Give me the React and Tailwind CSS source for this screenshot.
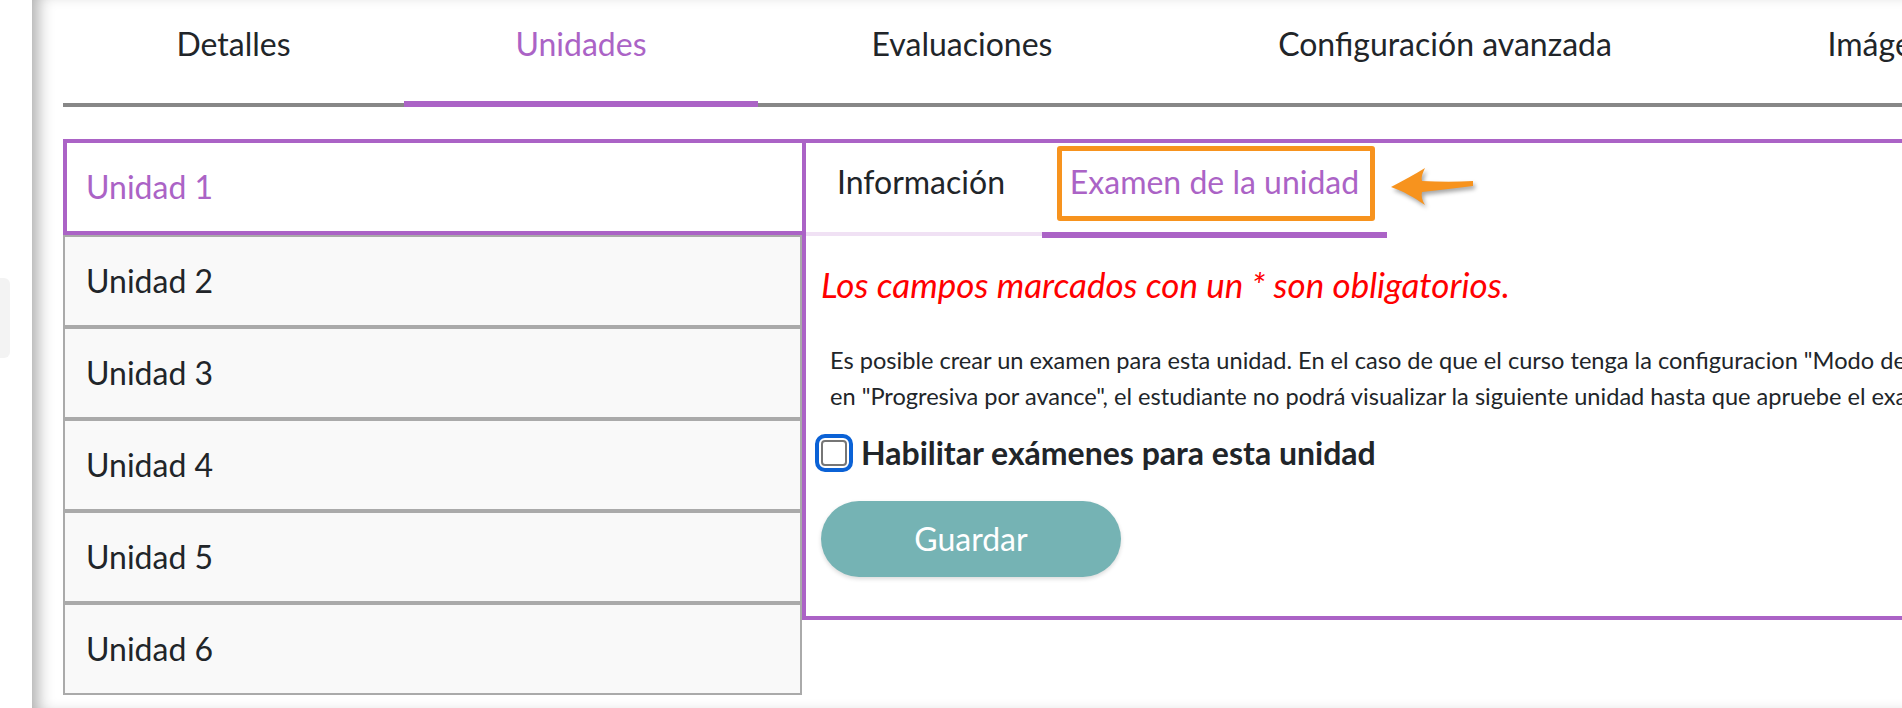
const topTabs = [
  { label: 'Detalles', width: 'w-[341px]' },
  { label: 'Unidades', width: 'w-[354px]', active: true },
  { label: 'Evaluaciones', width: 'w-[408px]' },
  { label: 'Configuración avanzada', width: 'w-[558px]' },
  { label: 'Imágenes', width: 'w-[340px]' },
];

const unidades = ['Unidad 1', 'Unidad 2', 'Unidad 3', 'Unidad 4', 'Unidad 5', 'Unidad 6'];

const ArrowMark = () => (
  <svg
    width="95"
    height="55"
    viewBox="0 0 95 55"
    className="absolute left-[343px] top-[17px] drop-shadow-[2px_3px_2px_rgba(0,0,0,0.35)]"
  >
    <path
      d="M6 27 C 18 21, 30 14, 40 8 C 37 14, 36 18, 37 21 C 55 22, 72 22, 88 21 L 88 26 C 72 28, 55 30, 37 32 C 36 36, 37 40, 40 45 C 30 38, 18 31, 6 27 Z"
      fill="#f7931e"
    />
  </svg>
);

export default function App() {
  return (
    <div className="w-screen h-[708px] overflow-hidden bg-white font-['Lato',sans-serif] text-[#212529]">
      <div className="flex w-[2400px] h-full">
        {/* sidebar edge */}
        <div className="w-[32px] shrink-0 pt-[278px]">
          <div className="w-[10px] h-[80px] rounded-r-md bg-[#f3f3f3]" />
        </div>

        <main className="flex-1 pl-[31px] shadow-[inset_14px_0_16px_-8px_rgba(0,0,0,0.32)]">
          {/* top tabs */}
          <nav className="flex items-start border-b-4 border-[#878787]">
            {topTabs.map((tab) =>
              tab.active ? (
                <div
                  key={tab.label}
                  className={`${tab.width} h-[107px] -mb-1 pt-[25px] border-b-[6px] border-[#ab63c6] text-center text-[32px] leading-[38px] text-[#ab63c6]`}
                >
                  {tab.label}
                </div>
              ) : (
                <div
                  key={tab.label}
                  className={`${tab.width} h-[103px] pt-[25px] text-center text-[32px] leading-[38px]`}
                >
                  {tab.label}
                </div>
              )
            )}
          </nav>

          <div className="mt-[32px] flex items-start">
            {/* units list */}
            <div className="w-[739px] shrink-0 flex flex-col text-[32px] leading-[38px]">
              {unidades.map((u, i) =>
                i === 0 ? (
                  <div
                    key={u}
                    className="h-[96px] flex items-center pl-[19px] border-4 border-r-0 border-[#ab63c6] bg-white text-[#ab63c6]"
                  >
                    {u}
                  </div>
                ) : (
                  <div
                    key={u}
                    className="h-[92px] flex items-center pl-[21px] border-2 border-[#aaaaaa] bg-[#f9f9f9]"
                  >
                    {u}
                  </div>
                )
              )}
            </div>

            {/* unit panel */}
            <section className="flex-1 border-4 border-[#ab63c6] pb-[39px]">
              <div className="flex items-start text-[32px] leading-[38px]">
                <div className="w-[236px] h-[93px] pt-[20px] pr-[6px] text-center border-b-4 border-[#f0e1f4]">
                  Información
                </div>
                <div className="relative w-[345px] h-[95px] pt-[20px] text-center border-b-[6px] border-[#ab63c6] text-[#ab63c6]">
                  Examen de la unidad
                  <div className="absolute left-[15px] top-[3px] w-[318px] h-[75px] border-[5px] border-[#f7931e] rounded-[3px]" />
                  <ArrowMark />
                </div>
              </div>

              <div className="pl-[15px]">
                <p className="mt-[25px] text-[35px] leading-[42px] italic text-[#ff0000]">
                  Los campos marcados con un * son obligatorios.
                </p>

                <div className="mt-[37px] pl-[9px] text-[23.6px] leading-[36px] whitespace-nowrap">
                  <p>
                    Es posible crear un examen para esta unidad. En el caso de que el curso tenga la configuracion "Modo de visualización de unidades"
                  </p>
                  <p>
                    en "Progresiva por avance", el estudiante no podrá visualizar la siguiente unidad hasta que apruebe el examen de la unidad anterior.
                  </p>
                </div>

                <label className="mt-[20px] flex items-center gap-[14px]">
                  <span className="w-[26px] h-[26px] shrink-0 rounded-[4px] border-2 border-[#767676] bg-white outline-4 outline-offset-2 outline-[#0b62d6]" />
                  <span className="text-[32px] leading-[38px] font-bold">Habilitar exámenes para esta unidad</span>
                </label>

                <button className="mt-[29px] w-[300px] h-[76px] rounded-full bg-[#75b3b4] text-white text-[32px] leading-[38px] shadow-[0_2px_4px_rgba(0,0,0,0.15)]">
                  Guardar
                </button>
              </div>
            </section>
          </div>
        </main>
      </div>
    </div>
  );
}
